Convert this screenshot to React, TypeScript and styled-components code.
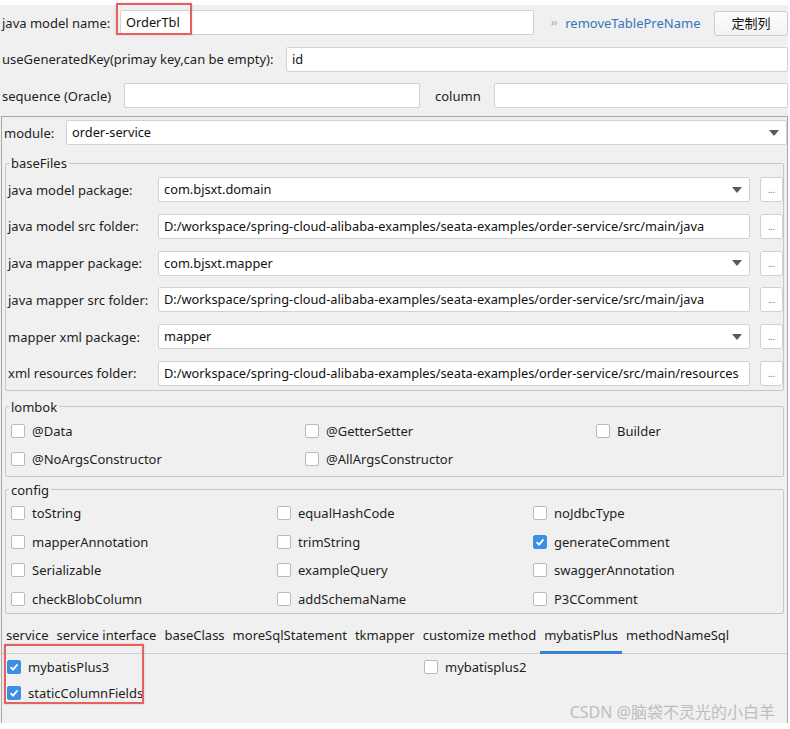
import React from 'react';
import styled, { createGlobalStyle, css } from 'styled-components';

const GlobalStyle = createGlobalStyle`
  html, body {
    margin: 0;
    padding: 0;
    background: #ffffff;
  }
  * {
    box-sizing: border-box;
  }
`;

const Window = styled.div`
  position: relative;
  display: flex;
  flex-direction: column;
  width: 788px;
  height: 718px;
  margin-top: 5px;
  background: #f0f0f0;
  font-family: 'Noto Sans', 'Noto Sans CJK SC', sans-serif;
  font-size: 13px;
  color: #1e1e1e;
`;

const TopArea = styled.div`
  display: flex;
  flex-direction: column;
  gap: 11.5px;
  padding: 5px 0 0 2px;
`;

const FieldRow = styled.div`
  display: flex;
  align-items: center;
  height: 25px;
`;

const Label = styled.span<{ $w?: number; $ml?: number }>`
  flex: none;
  width: ${p => (p.$w ? `${p.$w}px` : 'auto')};
  margin-left: ${p => p.$ml || 0}px;
  white-space: nowrap;
  line-height: 18px;
`;

const boxLook = css`
  height: 25px;
  min-width: 0;
  background: #ffffff;
  border: 1px solid #d2d2d2;
  border-radius: 2px;
  line-height: 23px;
  padding: 0 5px;
  white-space: nowrap;
  overflow: hidden;
  color: #111;
  font-size: 12.8px;
`;

const TextBox = styled.div<{ $w?: number }>`
  ${boxLook};
  flex: ${p => (p.$w ? 'none' : '1')};
  width: ${p => (p.$w ? `${p.$w}px` : 'auto')};
`;

const InputWrap = styled.div`
  position: relative;
  display: flex;
  flex: none;
`;

const Combo = styled.div`
  ${boxLook};
  flex: 1;
  display: flex;
  align-items: center;
  justify-content: space-between;
  &::after {
    content: '';
    width: 0;
    height: 0;
    border-left: 5px solid transparent;
    border-right: 5px solid transparent;
    border-top: 6px solid #5a5a5a;
    margin-right: 2px;
  }
`;

const Highlight = styled.span<{ $l: number; $t: number; $w: number; $h: number }>`
  position: absolute;
  left: ${p => p.$l}px;
  top: ${p => p.$t}px;
  width: ${p => p.$w}px;
  height: ${p => p.$h}px;
  border: 2px solid #e26262;
  box-shadow: 0 0 2px rgba(226, 98, 98, 0.4);
  pointer-events: none;
`;

const LinkText = styled.span`
  margin-left: 17px;
  color: #3575bd;
  white-space: nowrap;
  span {
    color: #8a96a6;
    font-size: 10px;
    margin-right: 8px;
    vertical-align: 2px;
  }
`;

const PlainButton = styled.div`
  margin-left: auto;
  width: 74px;
  height: 25px;
  margin-top: 1px;
  border: 1px solid #cdcdcd;
  border-radius: 3px;
  background: linear-gradient(#fdfdfd, #f3f3f3);
  text-align: center;
  line-height: 23px;
  color: #111;
`;

const Panel = styled.div`
  flex: 1;
  position: relative;
  margin: 8px 0 0 1px;
  width: 787px;
  border: 1px solid #a8a8a8;
  border-bottom: none;
  display: flex;
  flex-direction: column;
`;

const ModuleRow = styled.div`
  display: flex;
  align-items: center;
  height: 25px;
  margin-top: 3px;
  padding-left: 2px;
`;

const Group = styled.fieldset<{ $mt: number; $pb: number }>`
  min-width: 0;
  margin: ${p => p.$mt}px 3px 0 3px;
  padding: 0 0 ${p => p.$pb}px 2px;
  border: 1px solid #c6c6c6;
  border-radius: 2px;
`;

const Legend = styled.legend`
  margin-left: 1px;
  padding: 0 2px;
  font-size: 13px;
  line-height: 18px;
`;

const FileRows = styled.div`
  display: flex;
  flex-direction: column;
  gap: 11.8px;
  padding-top: 5px;
`;

const FileRow = styled.div`
  display: flex;
  align-items: center;
  height: 25px;
`;

const DotsButton = styled.div`
  flex: none;
  width: 23px;
  height: 25px;
  margin-left: 10px;
  border: 1px solid #d0d0d0;
  border-radius: 3px;
  background: #ffffff;
  color: #666;
  font-size: 9px;
  text-align: center;
  line-height: 24px;
`;

const CheckGrid = styled.div<{ $cols: string; $pt: number; $rowH: number; $pl: number }>`
  display: grid;
  grid-template-columns: ${p => p.$cols};
  grid-auto-rows: ${p => p.$rowH}px;
  padding: ${p => p.$pt}px 0 0 ${p => p.$pl}px;
`;

const CheckItem = styled.label`
  display: flex;
  align-items: center;
  gap: 7px;
  white-space: nowrap;
`;

const Box = styled.span<{ $checked?: boolean }>`
  flex: none;
  display: inline-flex;
  align-items: center;
  justify-content: center;
  width: 14px;
  height: 14px;
  border-radius: 2px;
  border: 1px solid ${p => (p.$checked ? '#3d8fe6' : '#b9b9b9')};
  background: ${p => (p.$checked ? '#3d8fe6' : '#ffffff')};
`;

const TabBar = styled.div`
  display: flex;
  margin-top: 12px;
  box-shadow: inset 0 -1px 0 #cfcfcf;
`;

const Tab = styled.div<{ $active?: boolean }>`
  padding: 0 4px 7px;
  line-height: 18px;
  white-space: nowrap;
  border-bottom: 3px solid ${p => (p.$active ? '#3a80d2' : 'transparent')};
`;

const TabContent = styled.div`
  position: relative;
`;

const Watermark = styled.div`
  position: absolute;
  right: 13px;
  bottom: 1px;
  font-size: 16px;
  line-height: 20px;
  color: #bdbdbd;
  font-family: 'Noto Sans', 'Noto Sans CJK SC', sans-serif;
`;

const Check = ({ checked, label }: { checked?: boolean; label: string }) => (
  <CheckItem>
    <Box $checked={checked}>
      {checked && (
        <svg width='10' height='10' viewBox='0 0 10 10'>
          <polyline points='1.5,5.2 4,7.6 8.5,2.4' fill='none' stroke='#ffffff' strokeWidth='1.8' />
        </svg>
      )}
    </Box>
    {label}
  </CheckItem>
);

const files = [
  { label: 'java model package:', value: 'com.bjsxt.domain', combo: true },
  { label: 'java model src folder:', value: 'D:/workspace/spring-cloud-alibaba-examples/seata-examples/order-service/src/main/java' },
  { label: 'java mapper package:', value: 'com.bjsxt.mapper', combo: true },
  { label: 'java mapper src folder:', value: 'D:/workspace/spring-cloud-alibaba-examples/seata-examples/order-service/src/main/java' },
  { label: 'mapper xml package:', value: 'mapper', combo: true },
  { label: 'xml resources folder:', value: 'D:/workspace/spring-cloud-alibaba-examples/seata-examples/order-service/src/main/resources' },
];

const lombok = ['@Data', '@GetterSetter', 'Builder', '@NoArgsConstructor', '@AllArgsConstructor'];

const config = [
  'toString', 'equalHashCode', 'noJdbcType',
  'mapperAnnotation', 'trimString', 'generateComment',
  'Serializable', 'exampleQuery', 'swaggerAnnotation',
  'checkBlobColumn', 'addSchemaName', 'P3CComment',
];

const tabs = ['service', 'service interface', 'baseClass', 'moreSqlStatement', 'tkmapper', 'customize method', 'mybatisPlus', 'methodNameSql'];

const App = () => {
  return (
    <>
      <GlobalStyle />
      <Window>
        <TopArea>
          <FieldRow>
            <Label $w={118}>java model name:</Label>
            <InputWrap>
              <TextBox $w={414}>OrderTbl</TextBox>
              <Highlight $l={-4} $t={-7} $w={76} $h={32} />
            </InputWrap>
            <LinkText>
              <span>››</span>removeTablePreName
            </LinkText>
            <PlainButton>定制列</PlainButton>
          </FieldRow>
          <FieldRow>
            <Label $w={284}>useGeneratedKey(primay key,can be empty):</Label>
            <TextBox>id</TextBox>
          </FieldRow>
          <FieldRow>
            <Label $w={122}>sequence (Oracle)</Label>
            <TextBox $w={296} />
            <Label $w={59} $ml={15}>column</Label>
            <TextBox />
          </FieldRow>
        </TopArea>

        <Panel>
          <ModuleRow>
            <Label $w={62}>module:</Label>
            <Combo>order-service</Combo>
          </ModuleRow>

          <Group $mt={9} $pb={4}>
            <Legend>baseFiles</Legend>
            <FileRows>
              {files.map(f => (
                <FileRow key={f.label}>
                  <Label $w={150}>{f.label}</Label>
                  {f.combo ? <Combo>{f.value}</Combo> : <TextBox>{f.value}</TextBox>}
                  <DotsButton>...</DotsButton>
                </FileRow>
              ))}
            </FileRows>
          </Group>

          <Group $mt={7} $pb={3}>
            <Legend>lombok</Legend>
            <CheckGrid $cols='294px 291px 1fr' $pt={1} $rowH={28} $pl={3}>
              {lombok.map(l => (
                <Check key={l} label={l} />
              ))}
            </CheckGrid>
          </Group>

          <Group $mt={4} $pb={0}>
            <Legend>config</Legend>
            <CheckGrid $cols='266px 256px 1fr' $pt={0} $rowH={28.6} $pl={3}>
              {config.map(c => (
                <Check key={c} label={c} checked={c === 'generateComment'} />
              ))}
            </CheckGrid>
          </Group>

          <TabBar>
            {tabs.map(t => (
              <Tab key={t} $active={t === 'mybatisPlus'}>
                {t}
              </Tab>
            ))}
          </TabBar>
          <TabContent>
            <CheckGrid $cols='417px 1fr' $pt={0} $rowH={26} $pl={5}>
              <Check checked label='mybatisPlus3' />
              <Check label='mybatisplus2' />
              <Check checked label='staticColumnFields' />
            </CheckGrid>
            <Highlight $l={2} $t={-10} $w={140} $h={60} />
          </TabContent>
        </Panel>
        <Watermark>CSDN @脑袋不灵光的小白羊</Watermark>
      </Window>
    </>
  );
};

export default App;
